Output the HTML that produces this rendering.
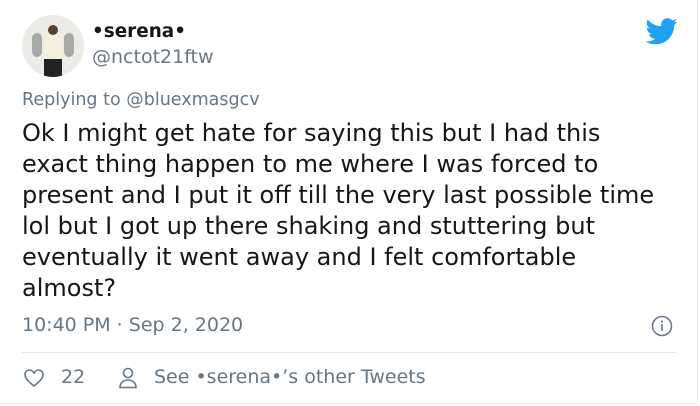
<!DOCTYPE html>
<html><head><meta charset="utf-8"><style>
html,body{margin:0;padding:0;background:#fff;}
body{width:700px;height:406px;position:relative;overflow:hidden;font-family:"DejaVu Sans","Liberation Sans",sans-serif;color:#14171a;}
.card{position:absolute;left:0;top:0;width:697px;height:403px;border:1px solid #e6ecf0;border-top:none;border-left:none;}
.av{position:absolute;left:22px;top:15px;width:62px;height:62px;border-radius:50%;background:#ecebe8;overflow:hidden;}
.t{position:absolute;white-space:nowrap;}
.g{color:#657786;}
</style></head><body>
<div class="card"></div>
<div class="av">
<div style="position:absolute;left:26px;top:10px;width:10px;height:10px;border-radius:50%;background:#5a4030"></div>
<div style="position:absolute;left:22px;top:20px;width:18px;height:24px;background:#f4f0dc"></div>
<div style="position:absolute;left:22px;top:44px;width:18px;height:18px;background:#222"></div>
<div style="position:absolute;left:10px;top:18px;width:10px;height:24px;border-radius:5px;background:#a8aaa8"></div>
<div style="position:absolute;left:42px;top:18px;width:10px;height:24px;border-radius:5px;background:#a8aaa8"></div>
</div>
<div class="t" style="left:92px;top:21px;font-size:18.4px;font-weight:bold;">•serena•</div>
<div class="t g" style="left:92px;top:46px;font-size:19px;">@nctot21ftw</div>
<svg style="position:absolute;left:646px;top:18px" width="32" height="27" viewBox="0 0 24 20"><path fill="#1da1f2" d="M23.6 2.4c-.9.4-1.8.6-2.8.8 1-.6 1.8-1.6 2.1-2.7-.9.6-2 1-3.1 1.2C18.9.7 17.6.1 16.2.1c-2.7 0-4.9 2.2-4.9 4.9 0 .4 0 .8.1 1.1C7.3 5.9 3.7 4 1.3 1 .9 1.700.6 2.6.6 3.5c0 1.7.9 3.2 2.2 4.1-.8 0-1.6-.2-2.200-.6v.1c0 2.4 1.7 4.4 3.9 4.8-.4.1-.8.2-1.3.2-.3 0-.6 0-.9-.1.6 2 2.4 3.4 4.6 3.4-1.7 1.3-3.8 2.1-6.1 2.1-.4 0-.8 0-1.2-.1 2.2 1.4 4.8 2.2 7.5 2.2 9.1 0 14-7.5 14-14v-.6c1-.7 1.8-1.6 2.5-2.6z"/></svg>
<div class="t g" style="left:22px;top:90px;font-size:17.5px;">Replying to @bluexmasgcv</div>
<div class="t" style="left:22px;top:118px;font-size:24px;line-height:31px;">Ok I might get hate for saying this but I had this<br>exact thing happen to me where I was forced to<br>present and I put it off till the very last possible time<br>lol but I got up there shaking and stuttering but<br>eventually it went away and I felt comfortable<br>almost?</div>
<div class="t g" style="left:22px;top:314px;font-size:19px;">10:40 PM · Sep 2, 2020</div>
<svg style="position:absolute;left:651px;top:315px" width="22" height="22" viewBox="0 0 22 22"><circle cx="11" cy="11" r="9.5" fill="none" stroke="#657786" stroke-width="1.5"/><rect x="10.2" y="9" width="1.6" height="7" fill="#657786"/><circle cx="11" cy="6.5" r="1.1" fill="#657786"/></svg>
<div style="position:absolute;left:22px;top:352px;width:654px;height:1px;background:#e1e6ea"></div>
<svg style="position:absolute;left:23px;top:367px" width="22" height="22" viewBox="0 0 22 22"><path d="M11 19C6 15 2 11.5 2 7.5 2 5 4 3 6.5 3 8.5 3 10 4.5 11 6c1-1.5 2.5-3 4.5-3C18 3 20 5 20 7.5 20 11.5 16 15 11 19z" fill="none" stroke="#657786" stroke-width="1.6"/></svg>
<div class="t g" style="left:61px;top:366px;font-size:19px;">22</div>
<svg style="position:absolute;left:117px;top:366px" width="22" height="24" viewBox="0 0 22 24"><circle cx="11" cy="7" r="4.5" fill="none" stroke="#657786" stroke-width="1.6"/><path d="M3 21.5c0-4.5 3.5-7.5 8-7.5s8 3 8 7.5z" fill="none" stroke="#657786" stroke-width="1.6"/></svg>
<div class="t g" style="left:154px;top:366px;font-size:19px;">See •serena•’s other Tweets</div>
</body></html>
